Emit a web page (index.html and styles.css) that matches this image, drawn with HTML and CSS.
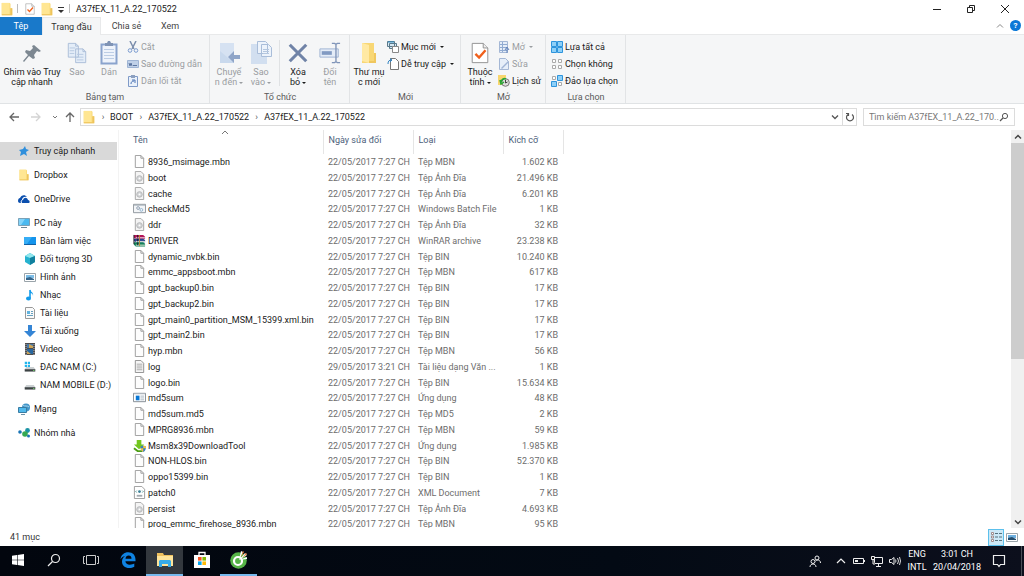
FILE: index.html
```html
<!DOCTYPE html>
<html lang="vi">
<head>
<meta charset="utf-8">
<title>A37fEX_11_A.22_170522</title>
<link rel="stylesheet" href="styles.css">
</head>
<body>
<svg class="sprite" aria-hidden="true">
  <symbol id="folder" viewBox="0 0 16 16"><path d="M2 1h9l1 1v5h2v8H2z" fill="#f8d775"/><path d="M2 1h9v13H2z" fill="#ffe693"/><path d="M12 7h2v8H2v-1h10z" fill="#eec45c"/></symbol>
  <symbol id="check-page" viewBox="0 0 20 24"><path d="M1.500 1.500h12l5 5v16h-17z" fill="#fff" stroke="#8c8c8c"/><path d="M13.500 1.500v5h5" fill="#eee" stroke="#8c8c8c"/><path d="M5 13l4 4 7-8" fill="none" stroke="#f0601c" stroke-width="2.600"/></symbol>
  <symbol id="f-page" viewBox="0 0 14 14"><path d="M2.500.5h6l3 3v10h-9z" fill="#fdfdfd" stroke="#9a9a9a"/><path d="M8.500.5v3h3" fill="none" stroke="#9a9a9a"/></symbol>
  <symbol id="f-disc" viewBox="0 0 14 14"><path d="M2.500.5h6l3 3v10h-9z" fill="#f4f4f4" stroke="#a4a4a4"/><circle cx="7" cy="8" r="3" fill="#d2d4d6" stroke="#b4b6b8"/><circle cx="7" cy="8" r="1" fill="#fff"/></symbol>
  <symbol id="f-batch" viewBox="0 0 14 14"><path d="M.5 2.500h13v9H.5z" fill="#f3f5f7" stroke="#8c939a"/><path d="M1 3.500h12" stroke="#aab4bd"/><circle cx="5.500" cy="6.500" r="1.500" fill="none" stroke="#8c9db0"/><circle cx="9" cy="8.500" r="1.500" fill="none" stroke="#8eb2d0"/></symbol>
  <symbol id="f-rar" viewBox="0 0 14 14"><path d="M1 1h10l2 2v2H3L1 4z" fill="#b31558"/><path d="M3 4h10" stroke="#eed6df"/><path d="M1 5h10l2 1.500V9H3L1 7.500z" fill="#27438e"/><path d="M3 8h10" stroke="#e7e7df"/><path d="M1 9h10l2 1.500v3H3l-2-2z" fill="#13805a"/><path d="M3 12h10" stroke="#f2f2e4"/><path d="M1 1v10M5 1v3M5 5v3M5 9v3" stroke="#211b21"/><path d="M7 1v12" stroke="#bd8a3b"/></symbol>
  <symbol id="f-text" viewBox="0 0 14 14"><path d="M2.500.5h6l3 3v10h-9z" fill="#f5f5f5" stroke="#8c8c8c"/><path d="M4 4.500h6M4 6.500h6M4 8.500h6M4 10.500h6" stroke="#a7a7a7"/></symbol>
  <symbol id="f-app" viewBox="0 0 14 14"><path d="M.5 2.500h13v9H.5z" fill="#fff" stroke="#7f8890"/><path d="M1 3h12" stroke="#b3bbc2"/><path d="M3 5h4v5H3z" fill="#0877d5"/><path d="M8 5.500h4M8 7.500h4M8 9.500h4" stroke="#a6b4c0"/></symbol>
  <symbol id="f-download" viewBox="0 0 14 14"><path d="M4 1h5v5h3L6.500 11 1 6h3z" fill="#72c61e"/><path d="M1 10l4 3h5" stroke="#4c9e14" stroke-width="2" fill="none"/><path d="M8 8l3-1 3 1c0 3-1 5-3 6-2-1-3-3-3-6z" fill="#397dbd"/><path d="M11 7l3 1v2h-3zM8 10h3v4c-1.500-1-2.500-2-3-4z" fill="#f1c340"/></symbol>
  <symbol id="f-xml" viewBox="0 0 14 14"><path d="M1.500.5h8l3 3v10h-11z" fill="#fff" stroke="#999"/><path d="M4 5L3 6l1 1M10 5l1 1-1 1" fill="none" stroke="#438f8a"/><circle cx="7" cy="6" r="1.500" fill="#3b8097"/><path d="M4 10.500h6" stroke="#a2aab0" stroke-width="2"/></symbol>
  <symbol id="i-copy" viewBox="0 0 22 24"><path d="M1.500 1.500h8l3 3v12h-11zM9.500 7.500h8l3 3v12h-11z" fill="#e4edf8" stroke="#a9bbd6"/><path d="M3 6.500h6M3 9.500h5M3 12.500h5M11 13.500h7M11 16.500h7M11 19.500h7" stroke="#b5c7df"/><path d="M9.500 1.500v3h3M17.500 7.500v3h3" fill="none" stroke="#a9bbd6"/></symbol>
  <symbol id="i-drive" viewBox="0 0 16 16"><path d="M3 8h10l2 3v3H1v-3z" fill="#cbd0d2"/><path d="M1 11h14v3H1z" fill="#3d4344"/><path d="M12 12h2v1h-2z" fill="#75e06c"/></symbol>
</svg>

<header class="titlebar">
  <svg class="ico14"><use href="#folder"/></svg><span class="tick"></span>
  <button class="quick" aria-label="Thuộc tính"><svg class="ico12"><use href="#check-page"/></svg></button>
  <button class="quick" aria-label="Thư mục mới"><svg class="ico14"><use href="#folder"/></svg></button>
  <button class="quick small" aria-label="Tùy chỉnh"><svg class="ico8" viewBox="0 0 8 8"><path d="M1 2.500h6" stroke="#333"/><path d="M1 5h6L4 8z" fill="#333"/></svg></button>
  <span class="tick"></span>
  <h1 class="title">A37fEX_11_A.22_170522</h1>
  <div class="winbtns">
    <button aria-label="Thu nhỏ"><svg class="ico10" viewBox="0 0 10 10"><path d="M1 5.500h8" stroke="#222"/></svg></button>
    <button aria-label="Khôi phục"><svg class="ico10" viewBox="0 0 10 10"><path d="M1.500 3.500h5v5h-5zM3.500 3V1.500h5v5H7" fill="none" stroke="#222"/></svg></button>
    <button aria-label="Đóng"><svg class="ico10" viewBox="0 0 10 10"><path d="M1 1l8 8M9 1L1 9" stroke="#222"/></svg></button>
  </div>
</header>

<nav class="tabs">
  <button class="tab file">Tệp</button><button class="tab active">Trang đầu</button><button class="tab share">Chia sẻ</button><button class="tab view">Xem</button>
  <span class="tabtools">
    <button aria-label="Thu gọn"><svg class="ico8" viewBox="0 0 8 8"><path d="M1 5.500l3-3 3 3" fill="none" stroke="#888"/></svg></button>
    <button class="help" aria-label="Trợ giúp">?</button>
  </span>
</nav>

<section class="ribbon">
  <div class="group">
    <div class="tools">
      <button class="big pin"><svg class="ico24" viewBox="0 0 24 24"><path d="M14 4l7 6-2 1-2-1-3 4 1 3-2 1-4-3-5 6-1-1 5-6-3-3 1-2 4 1 3-3-1-2z" fill="#7c8791"/></svg><span>Ghim vào Truy<br>cập nhanh</span></button>
      <button class="big off"><svg class="ico22"><use href="#i-copy"/></svg><span>Sao</span></button>
      <button class="big off w36"><svg class="ico24" viewBox="0 0 24 24"><path d="M4.500 3.500h15v19h-15z" fill="#eef3fb" stroke="#8aa3cd" stroke-width="2"/><path d="M8 2h2l1-2h2l1 2h2v3H8z" fill="#7f93b4"/><path d="M7 8.500h10M7 11.500h10M7 14.500h10M7 17.500h10" stroke="#bccde5"/></svg><span>Dán</span></button>
      <div class="stack">
        <button class="row off"><svg class="ico12" viewBox="0 0 12 12"><path d="M3 0l4 8M9 0L5 8" stroke="#7b8ead" stroke-width="1.500"/><circle cx="3" cy="9.500" r="1.800" fill="none" stroke="#7b9cd0"/><circle cx="9" cy="9.500" r="1.800" fill="none" stroke="#7b9cd0"/></svg>Cắt</button>
        <button class="row off"><svg class="ico12" viewBox="0 0 12 12"><path d="M.5 2.500h11v7H.5z" fill="#bfd0e8" stroke="#9eb4d4"/><path d="M2 5l1 3 1-3 1 3M6 7.500h4" fill="none" stroke="#5b75a0"/></svg>Sao đường dẫn</button>
        <button class="row off"><svg class="ico12" viewBox="0 0 12 12"><path d="M1.500 1.500h9v10h-9z" fill="#eaf1fa" stroke="#7f9ac8"/><path d="M4 0h4v3H4z" fill="#8ca0c0"/><path d="M4 9c0-2 1-3 3-3M5 5h3v3" fill="none" stroke="#4c74b5"/></svg>Dán lối tắt</button>
      </div>
    </div>
    <h2>Bảng tạm</h2>
  </div>
  <div class="group">
    <div class="tools pad2">
      <button class="big off w32"><svg class="ico24" viewBox="0 0 24 24"><path d="M3 2h14v20H3z" fill="#d6e2f2"/><path d="M3 22V10l14 12z" fill="#c9d9ed"/><path d="M23 14v4h-6v4l-6-6 6-6v4z" fill="#8fa5c8"/></svg><span>Chuyể<br>n đến<i class="caret"></i></span></button>
      <button class="big off w32"><svg class="ico24" viewBox="0 0 24 24"><path d="M2 3h16v20H2z" fill="#d2dff0"/><path d="M8.500.5h8l2 2v10h-10zM12.500 3.500h7l3 3v9h-10z" fill="#edf3fb" stroke="#a9bdd9"/><path d="M14 8.500h6M14 10.500h6M14 12.500h6" stroke="#b5c7df"/></svg><span>Sao<br>vào<i class="caret"></i></span></button>
      <span class="divider"></span>
      <button class="big w32"><svg class="ico22" viewBox="0 0 24 24"><path d="M3 3l18 18M21 3L3 21" stroke="#7083a7" stroke-width="3.400"/></svg><span>Xóa<br>bỏ<i class="caret"></i></span></button>
      <button class="big off w32"><svg class="ico22" viewBox="0 0 24 24"><path d="M1 7.500h20v9H1z" fill="#e4ecf7" stroke="#9db1d1"/><path d="M3 10h11v4H3z" fill="#819ac2"/><path d="M14 1.500h3l1.500 1 1.500-1h3M18.500 2v20M14 22.500h3l1.500-1 1.500 1h3" fill="none" stroke="#8095b9" stroke-width="1.500"/></svg><span>Đổi<br>tên</span></button>
    </div>
    <h2>Tổ chức</h2>
  </div>
  <div class="group">
    <div class="tools">
      <button class="big w36"><svg class="ico24" viewBox="0 0 24 24"><path d="M5 2h12v10h2v10H5z" fill="#f8d775"/><path d="M5 2l7 2v18l-7-2z" fill="#ffe9a3"/><path d="M17 12h2v10h-7v-2h5z" fill="#f0c75f"/></svg><span>Thư mụ<br>c mới</span></button>
      <div class="stack">
        <button class="row"><svg class="ico12" viewBox="0 0 12 12"><path d="M.5.5h7v5h-7zM2.500 2.500h7v5h-7z" fill="#d6e7f2" stroke="#597889"/><path d="M5.500 5.500h6v6h-6z" fill="#fff" stroke="#888"/><path d="M1 1h6" stroke="#338dc1"/></svg>Mục mới<i class="caret"></i></button>
        <button class="row"><svg class="ico12" viewBox="0 0 12 12"><path d="M3.500.5h5l3 3v8h-8z" fill="#fff" stroke="#777"/><path d="M1 6c0-3 1-4 4-4M3 .5L5 2 3 4" fill="none" stroke="#3385c3"/></svg>Dễ truy cập<i class="caret"></i></button>
      </div>
    </div>
    <h2>Mới</h2>
  </div>
  <div class="group">
    <div class="tools">
      <button class="big w36"><svg class="ico22"><use href="#check-page"/></svg><span>Thuộc<br>tính<i class="caret"></i></span></button>
      <div class="stack">
        <button class="row off"><svg class="ico12" viewBox="0 0 12 12"><path d="M1.500.5h8v11h-8z" fill="#e6edf8" stroke="#a4b7d5"/><path d="M2 3.500h7M2 6.500h7M2 9.500h7M4.500 1v10" stroke="#91abd1"/><path d="M9 12V7M7 9l2-3 2 3" stroke="#6282b9" fill="none"/></svg>Mở<i class="caret"></i></button>
        <button class="row off"><svg class="ico12" viewBox="0 0 12 12"><path d="M1.500.5h6l3 3v8h-9z" fill="#e6eef9" stroke="#a4b7d5"/><path d="M3 10l7-7 1 1-7 7z" fill="#9fb4d6"/></svg>Sửa</button>
        <button class="row"><svg class="ico12" viewBox="0 0 12 12"><path d="M0 0h8v10H0z" fill="#f8d66e"/><circle cx="7.500" cy="7.500" r="3.800" fill="#ddd" stroke="#777"/><path d="M7.500 5v3l2-1" stroke="#444" fill="none"/><path d="M3 7c1-3 3-4 5-3M2 5l1 4 3-2" fill="none" stroke="#25a734" stroke-width="1.500"/></svg>Lịch sử</button>
      </div>
    </div>
    <h2>Mở</h2>
  </div>
  <div class="group">
    <div class="tools pad4">
      <div class="stack">
        <button class="row"><svg class="ico12" viewBox="0 0 12 12"><path d="M.5.5h5v5h-5zM6.500.5h5v5h-5zM.5 6.500h5v5h-5zM6.500 6.500h5v5h-5z" fill="#8ed0f8" stroke="#2d94dc"/></svg>Lựa tất cả</button>
        <button class="row"><svg class="ico12" viewBox="0 0 12 12"><path d="M1.500 1.500h3v3h-3zM7.500 1.500h3v3h-3zM1.500 7.500h3v3h-3zM7.500 7.500h3v3h-3z" fill="#fff" stroke="#aaa"/></svg>Chọn không</button>
        <button class="row"><svg class="ico12" viewBox="0 0 12 12"><path d="M6.500.5h5v5h-5zM.5 6.500h5v5h-5z" fill="#8ed0f8" stroke="#2d94dc"/><path d="M1.500 1.500h3v3h-3zM7.500 7.500h3v3h-3z" fill="#fff" stroke="#aaa"/></svg>Đảo lựa chọn</button>
      </div>
    </div>
    <h2>Lựa chọn</h2>
  </div>
</section>

<div class="navbar">
  <button class="nav" aria-label="Quay lại"><svg class="ico10" viewBox="0 0 10 10"><path d="M10 5H1M5 1L1 5l4 4" fill="none" stroke="#666" stroke-width="1.300"/></svg></button>
  <button class="nav" aria-label="Tiến"><svg class="ico10" viewBox="0 0 10 10"><path d="M0 5h9M5 1l4 4-4 4" fill="none" stroke="#d4d4d4" stroke-width="1.300"/></svg></button>
  <button class="nav narrow" aria-label="Gần đây"><svg class="ico8" viewBox="0 0 8 8"><path d="M2 3l2 2 2-2" fill="none" stroke="#777"/></svg></button>
  <button class="nav narrow" aria-label="Lên"><svg class="ico10" viewBox="0 0 10 10"><path d="M5 10V1M1 5l4-4 4 4" fill="none" stroke="#666" stroke-width="1.300"/></svg></button>
  <div class="address">
    <svg class="ico14"><use href="#folder"/></svg>
    <span class="sep">›</span><a href="#boot">BOOT</a><span class="sep">›</span><a href="#outer">A37fEX_11_A.22_170522</a><span class="sep">›</span><a href="#inner">A37fEX_11_A.22_170522</a>
    <button class="drop" aria-label="Lịch sử địa chỉ"><svg class="ico8" viewBox="0 0 8 8"><path d="M1 2.500l3 3 3-3" fill="none" stroke="#555" stroke-width="1.300"/></svg></button>
    <button class="refresh" aria-label="Làm mới"><svg class="ico10" viewBox="0 0 10 10"><path d="M7 2.500a3.500 3.500 0 1 1-4 0M1 1.500h2.500V4" fill="none" stroke="#555" stroke-width="1.200"/></svg></button>
  </div>
  <div class="search">
    <input type="text" aria-label="Tìm kiếm" placeholder="Tìm kiếm A37fEX_11_A.22_170...">
    <svg class="ico10" viewBox="0 0 10 10"><circle cx="6" cy="4" r="2.600" fill="none" stroke="#555"/><path d="M4 6L1 9" stroke="#555" stroke-width="1.300"/></svg>
  </div>
</div>

<main class="content">
  <aside class="side">
    <ul>
      <li><a class="selected" href="#quick"><svg class="ico12" viewBox="0 0 12 12"><path d="M7 1l1 3 3 1-3 2 1 4-3-2-4 2 1-4-2-2 4-1z" fill="#2f8fdc"/></svg>Truy cập nhanh</a></li>
    </ul>
    <ul><li><a href="#dropbox"><svg class="ico12"><use href="#folder"/></svg>Dropbox</a></li></ul>
    <ul><li><a href="#onedrive"><svg class="ico12" viewBox="0 0 12 12"><path d="M0 8c0-2 1-3 2-3 1-3 5-4 7-1-3-1-5 1-5 3-1 0-2 2-1 3H2C1 10 0 9 0 8z" fill="#0b4fae"/><path d="M4 10c-1-2 0-3 1-3 1-3 4-3 5 0 2 0 2 3 1 3z" fill="#0b4fae"/></svg>OneDrive</a></li></ul>
    <ul>
      <li><a href="#pc"><svg class="ico12" viewBox="0 0 12 12"><path d="M.5 1.500h11v7H.5z" fill="#49b9f0" stroke="#7aa1b7"/><path d="M1 2h6L3 8H1z" fill="#83d4fa"/><path d="M3 10.500h6" stroke="#6b8798"/></svg>PC này</a></li>
      <li class="sub"><a href="#desktop"><svg class="ico12" viewBox="0 0 12 12"><path d="M0 2h12v8H0z" fill="#1494ec"/><path d="M0 2h8L3 9H0z" fill="#36adf5"/><path d="M0 9.500h12" stroke="#1261a5"/></svg>Bàn làm việc</a></li>
      <li class="sub"><a href="#3d"><svg class="ico12" viewBox="0 0 12 12"><path d="M1 3l5-3 5 3v6l-5 3-5-3z" fill="#26b2cf"/><path d="M1 3l5-3 5 3-5 2z" fill="#91e6ed"/><path d="M6 5l5-2v6l-5 3z" fill="#11809e"/></svg>Đối tượng 3D</a></li>
      <li class="sub"><a href="#pics"><svg class="ico12" viewBox="0 0 12 12"><path d="M.5 2.500h11v8H.5z" fill="#fff" stroke="#9aa4aa"/><path d="M2 4h8v3H2z" fill="#7cbde7"/><path d="M2 7l4-1 4 2v1H2z" fill="#34658b"/></svg>Hình ảnh</a></li>
      <li class="sub"><a href="#music"><svg class="ico12" viewBox="0 0 12 12"><path d="M6 1v8" stroke="#149bea" stroke-width="1.600"/><path d="M6 0c0 3 4 3 3 7 0-2-1-3-3-3z" fill="#149bea"/><ellipse cx="4.500" cy="9.500" rx="2.500" ry="2" fill="#149bea"/></svg>Nhạc</a></li>
      <li class="sub"><a href="#docs"><svg class="ico12" viewBox="0 0 12 12"><path d="M1.500.5h7l2 2v9h-9z" fill="#fafafa" stroke="#999"/><path d="M3 4h3v3H3z" fill="#60b3df"/><path d="M7 4.500h2M7 6.500h2M3 8.500h6" stroke="#66a1c0"/></svg>Tài liệu</a></li>
      <li class="sub"><a href="#down"><svg class="ico12" viewBox="0 0 12 12"><path d="M4 0h4v6h4l-6 6-6-6h4z" fill="#3585d5"/></svg>Tải xuống</a></li>
      <li class="sub"><a href="#video"><svg class="ico12" viewBox="0 0 12 12"><path d="M1 0h10v12H1z" fill="#4c4c4e"/><path d="M3 1h6v4H3z" fill="#497aaa"/><path d="M3 6h6v5H3z" fill="#2867a0"/><path d="M5 1l4 2v2H5zM3 8l4 3H3z" fill="#cda557"/><path d="M2 1v11M10 1v11" stroke="#bbb" stroke-dasharray="1 1"/></svg>Video</a></li>
      <li class="sub"><a href="#c"><svg class="ico12" viewBox="0 0 16 16"><path d="M1 1h3v3H1zM5 1h3v3H5zM1 5h3v3H1zM5 5h3v3H5z" fill="#20b5ec"/><use href="#i-drive" width="16" height="16"/></svg>ĐAC NAM (C:)</a></li>
      <li class="sub"><a href="#d"><svg class="ico12"><use href="#i-drive"/></svg>NAM MOBILE (D:)</a></li>
    </ul>
    <ul><li><a href="#network"><svg class="ico12" viewBox="0 0 12 12"><circle cx="8" cy="4.500" r="4" fill="#4294c7"/><path d="M5 2c2 2 4 0 6 2" stroke="#aad8ef" fill="none"/><path d="M.5 4.500h8v5h-8z" fill="#50b9ec" stroke="#397ca2"/><path d="M3 11.500h4" stroke="#6d92a9"/></svg>Mạng</a></li></ul>
    <ul><li><a href="#home"><svg class="ico12" viewBox="0 0 12 12"><circle cx="2" cy="5" r="1.800" fill="#1874b5"/><circle cx="9.500" cy="3.500" r="2.400" fill="#1b93a5"/><circle cx="7" cy="7" r="2.800" fill="#35a851"/><circle cx="10.500" cy="9" r="1.500" fill="#1874b5"/></svg>Nhóm nhà</a></li></ul>
  </aside>

  <div class="files">
    <table>
      <colgroup><col class="c-name"><col class="c-date"><col class="c-type"><col class="c-size"><col></colgroup>
      <thead><tr><th>Tên<svg class="sort" viewBox="0 0 8 4"><path d="M1 4l3-3 3 3" fill="none" stroke="#777"/></svg></th><th>Ngày sửa đổi</th><th>Loại</th><th>Kích cỡ</th><td></td></tr></thead>
      <tbody>
        <tr><td><svg><use href="#f-page"/></svg>8936_msimage.mbn</td><td>22/05/2017 7:27 CH</td><td>Tệp MBN</td><td>1.602 KB</td></tr>
        <tr><td><svg><use href="#f-disc"/></svg>boot</td><td>22/05/2017 7:27 CH</td><td>Tệp Ảnh Đĩa</td><td>21.496 KB</td></tr>
        <tr><td><svg><use href="#f-disc"/></svg>cache</td><td>22/05/2017 7:27 CH</td><td>Tệp Ảnh Đĩa</td><td>6.201 KB</td></tr>
        <tr><td><svg><use href="#f-batch"/></svg>checkMd5</td><td>22/05/2017 7:27 CH</td><td>Windows Batch File</td><td>1 KB</td></tr>
        <tr><td><svg><use href="#f-disc"/></svg>ddr</td><td>22/05/2017 7:27 CH</td><td>Tệp Ảnh Đĩa</td><td>32 KB</td></tr>
        <tr><td><svg><use href="#f-rar"/></svg>DRIVER</td><td>22/05/2017 7:27 CH</td><td>WinRAR archive</td><td>23.238 KB</td></tr>
        <tr><td><svg><use href="#f-page"/></svg>dynamic_nvbk.bin</td><td>22/05/2017 7:27 CH</td><td>Tệp BIN</td><td>10.240 KB</td></tr>
        <tr><td><svg><use href="#f-page"/></svg>emmc_appsboot.mbn</td><td>22/05/2017 7:27 CH</td><td>Tệp MBN</td><td>617 KB</td></tr>
        <tr><td><svg><use href="#f-page"/></svg>gpt_backup0.bin</td><td>22/05/2017 7:27 CH</td><td>Tệp BIN</td><td>17 KB</td></tr>
        <tr><td><svg><use href="#f-page"/></svg>gpt_backup2.bin</td><td>22/05/2017 7:27 CH</td><td>Tệp BIN</td><td>17 KB</td></tr>
        <tr><td><svg><use href="#f-page"/></svg>gpt_main0_partition_MSM_15399.xml.bin</td><td>22/05/2017 7:27 CH</td><td>Tệp BIN</td><td>17 KB</td></tr>
        <tr><td><svg><use href="#f-page"/></svg>gpt_main2.bin</td><td>22/05/2017 7:27 CH</td><td>Tệp BIN</td><td>17 KB</td></tr>
        <tr><td><svg><use href="#f-page"/></svg>hyp.mbn</td><td>22/05/2017 7:27 CH</td><td>Tệp MBN</td><td>56 KB</td></tr>
        <tr><td><svg><use href="#f-text"/></svg>log</td><td>29/05/2017 3:21 CH</td><td>Tài liệu dạng Văn ...</td><td>1 KB</td></tr>
        <tr><td><svg><use href="#f-page"/></svg>logo.bin</td><td>22/05/2017 7:27 CH</td><td>Tệp BIN</td><td>15.634 KB</td></tr>
        <tr><td><svg><use href="#f-app"/></svg>md5sum</td><td>22/05/2017 7:27 CH</td><td>Ứng dụng</td><td>48 KB</td></tr>
        <tr><td><svg><use href="#f-page"/></svg>md5sum.md5</td><td>22/05/2017 7:27 CH</td><td>Tệp MD5</td><td>2 KB</td></tr>
        <tr><td><svg><use href="#f-page"/></svg>MPRG8936.mbn</td><td>22/05/2017 7:27 CH</td><td>Tệp MBN</td><td>59 KB</td></tr>
        <tr><td><svg><use href="#f-download"/></svg>Msm8x39DownloadTool</td><td>22/05/2017 7:27 CH</td><td>Ứng dụng</td><td>1.985 KB</td></tr>
        <tr><td><svg><use href="#f-page"/></svg>NON-HLOS.bin</td><td>22/05/2017 7:27 CH</td><td>Tệp BIN</td><td>52.370 KB</td></tr>
        <tr><td><svg><use href="#f-page"/></svg>oppo15399.bin</td><td>22/05/2017 7:27 CH</td><td>Tệp BIN</td><td>1 KB</td></tr>
        <tr><td><svg><use href="#f-xml"/></svg>patch0</td><td>22/05/2017 7:27 CH</td><td>XML Document</td><td>7 KB</td></tr>
        <tr><td><svg><use href="#f-disc"/></svg>persist</td><td>22/05/2017 7:27 CH</td><td>Tệp Ảnh Đĩa</td><td>4.693 KB</td></tr>
        <tr><td><svg><use href="#f-page"/></svg>prog_emmc_firehose_8936.mbn</td><td>22/05/2017 7:27 CH</td><td>Tệp MBN</td><td>95 KB</td></tr>
      </tbody>
    </table>
  </div>

  <div class="scroll">
    <button aria-label="Cuộn lên"><svg class="ico8" viewBox="0 0 8 8"><path d="M1 5.500l3-3 3 3" fill="none" stroke="#444" stroke-width="1.500"/></svg></button>
    <div class="track"><div class="thumb"></div></div>
    <button aria-label="Cuộn xuống"><svg class="ico8" viewBox="0 0 8 8"><path d="M1 2.500l3 3 3-3" fill="none" stroke="#444" stroke-width="1.500"/></svg></button>
  </div>
</main>

<footer class="status">
  <span class="count">41 mục</span>
  <span class="views">
    <button class="on" aria-label="Chi tiết"><svg class="ico12" viewBox="0 0 12 12"><path d="M1.500 1.500h2v2h-2zM1.500 5h2v2h-2zM1.500 8.500h2v2h-2z" fill="#fff" stroke="#a08c8c"/><path d="M5 2.500h3M9 2.500h3M5 6h3M9 6h3M5 9.500h3M9 9.500h3" stroke="#56717d"/></svg></button>
    <button aria-label="Biểu tượng lớn"><svg class="ico12" viewBox="0 0 12 12"><path d="M.5 2.500h11v8H.5z" fill="#fff" stroke="#9aa4aa"/><path d="M2 4h8v3H2z" fill="#6dafdf"/><path d="M2 7l4-1 4 2v1H2z" fill="#244c6b"/></svg></button>
  </span>
</footer>

<nav class="taskbar">
  <button class="task first" aria-label="Bắt đầu"><svg class="ico12" viewBox="0 0 12 12"><path d="M0 1.700L5 1v4.700H0zM5.600.9L12 0v5.700H5.600zM0 6.300h5V11l-5-.7zM5.600 6.300H12V12l-6.400-.9z" fill="#fff"/></svg></button>
  <button class="task first" aria-label="Tìm kiếm"><svg class="ico14" viewBox="0 0 14 14"><circle cx="8.500" cy="5.500" r="4" fill="none" stroke="#eee" stroke-width="1.200"/><path d="M5.500 8.500L1 13" stroke="#eee" stroke-width="1.300"/></svg></button>
  <button class="task" aria-label="Dạng xem tác vụ"><svg class="ico16" viewBox="0 0 16 16"><path d="M3.500 3.500h9v9h-9zM2 4.500H.5v7H2M14 4.500h1.500v7H14" fill="none" stroke="#ccc"/></svg></button>
  <button class="task" aria-label="Edge"><svg class="ico16" viewBox="0 0 16 16"><path d="M.5 7.200C1 3 4.200.3 8.300.3c4.600 0 7.200 3.200 7.200 7.200v1.800H5.400c.2 2.300 2 3.500 4.400 3.500 1.800 0 3.200-.5 4.500-1.200v3.200c-1.400.8-3.200 1.200-5 1.200-4.500 0-7.300-2.600-7.300-6.500 0-2.500 1.200-4.400 3.600-5.700C3.800 4.200 1.900 5.200.5 7.200zM5.500 6.700h6c0-2-1-3.100-2.800-3.100-1.800 0-3 1.200-3.200 3.100z" fill="#0f83e2"/></svg></button>
  <button class="task current" aria-label="File Explorer"><svg class="ico16" viewBox="0 0 16 16"><path d="M0 1h6l1 2h9v11H0z" fill="#eec05e"/><path d="M0 4h16v10H0z" fill="#ffe49a"/><path d="M2 15V9l1-1h10l1 1v6h-3v-3H5v3z" fill="#37abe7"/></svg></button>
  <button class="task" aria-label="Store"><svg class="ico18" viewBox="0 0 18 18"><path d="M6 5V1.500h6V5" fill="none" stroke="#fff" stroke-width="1.300"/><path d="M1 4h16v13H1z" fill="#fff"/><path d="M5 6h3.600v3.600H5z" fill="#f35325"/><path d="M9.400 6H13v3.600H9.400z" fill="#81bc06"/><path d="M5 10.400h3.600V14H5z" fill="#05a6f0"/><path d="M9.400 10.400H13V14H9.400z" fill="#ffba08"/></svg></button>
  <button class="task running" aria-label="Cốc Cốc"><svg class="ico18" viewBox="0 0 18 18"><circle cx="8.500" cy="9.500" r="8.300" fill="#56b447"/><circle cx="8" cy="10" r="4" fill="none" stroke="#fff" stroke-width="2.200"/><path d="M9 9l2-9 2 1zM9 9l6-7 2 2zM9 9l8-3v2z" fill="#fff"/><path d="M11 6l2-6 1 1zM12 7l4-5 1 1z" fill="#ee7d35"/></svg></button>
  <div class="tray">
    <button class="people" aria-label="Mọi người"><svg class="ico12" viewBox="0 0 12 12"><circle cx="8" cy="3" r="2" fill="none" stroke="#eee"/><circle cx="4" cy="6.500" r="2" fill="none" stroke="#eee"/><path d="M1 12c0-4 6-4 6 0M6.500 6c2-2 5-1 5 2" fill="none" stroke="#eee"/></svg></button>
    <button aria-label="Biểu tượng ẩn"><svg class="ico10" viewBox="0 0 10 10"><path d="M1 7l4-4 4 4" fill="none" stroke="#eee" stroke-width="1.200"/></svg></button>
    <button aria-label="Pin"><svg class="ico12" viewBox="0 0 12 12"><path d="M.5 3.500h10v5H.5z" fill="none" stroke="#eee"/><path d="M2 5h3v2H2zM11 5h1v2h-1z" fill="#eee"/></svg></button>
    <button aria-label="Mạng"><svg class="ico12" viewBox="0 0 12 12"><path d="M3.500 2.500h8v6h-8zM7.500 9v2M5 11.500h5" fill="none" stroke="#eee"/><path d="M.5 1.500h3v3h-3zM2 5v4h2" fill="#111" stroke="#eee"/></svg></button>
    <button aria-label="Âm lượng"><svg class="ico12" viewBox="0 0 12 12"><path d="M.5 4.500h2l2.500-2v7l-2.500-2h-2z" fill="none" stroke="#eee"/><path d="M6.500 4.500q1 1.500 0 3M8.500 3q2 3 0 6M10.500 2q2 4 0 8" fill="none" stroke="#ddd"/></svg></button>
    <button class="lang">ENG<br>INTL</button>
    <button class="clock">3:01 CH<br>20/04/2018</button>
    <button class="notes" aria-label="Thông báo"><svg class="ico14" viewBox="0 0 14 14"><path d="M1.500 1.500h11v9h-4L7 12.500 5.500 10.500h-4z" fill="none" stroke="#eee" stroke-width="1.200"/></svg></button>
  </div>
</nav>
</body>
</html>
```

FILE: styles.css
```css
* { box-sizing: border-box; }
body {
  margin: 0;
  height: 100vh;
  display: flex;
  flex-direction: column;
  overflow: hidden;
  background: #fff;
  color: #1a1a1a;
  font: 9px/12px Roboto, "Noto Sans", sans-serif;
}
button {
  margin: 0;
  padding: 0;
  border: 0;
  background: none;
  color: inherit;
  font: inherit;
  display: flex;
  align-items: center;
  justify-content: center;
}
a { color: inherit; text-decoration: none; }
h1, h2, ul { margin: 0; padding: 0; font: inherit; list-style: none; }
svg { flex: none; display: block; }
.sprite { position: absolute; width: 0; height: 0; }
.ico8 { width: 8px; height: 8px; }
.ico10 { width: 10px; height: 10px; }
.ico12 { width: 12px; height: 12px; }
.ico14 { width: 14px; height: 14px; }
.ico16 { width: 16px; height: 16px; }
.ico18 { width: 18px; height: 18px; }
.ico22 { width: 22px; height: 22px; margin: 1px 0; }
.ico24 { width: 24px; height: 24px; }

.titlebar { display: flex; align-items: center; height: 17px; flex: none; }
.tick { width: 1px; height: 9px; margin: 0 3px; background: #bbb; }
.quick { width: 17px; height: 17px; }
.quick.small { width: 11px; }
.title { margin-left: 3px; }
.winbtns { display: flex; margin-left: auto; padding-right: 2px; }
.winbtns button { width: 34px; height: 16px; }

.tabs { display: flex; height: 18px; flex: none; border-bottom: 1px solid #e8e9ea; color: #444; }
.tab { height: 18px; }
.tab.file { width: 42px; background: #1979ca; color: #fff; }
.tab.active { width: 59px; background: #f5f6f7; border: 1px solid #e8e9ea; border-bottom: 0; color: #333; }
.tab.share { width: 51px; }
.tab.view { width: 36px; }
.tabtools { display: flex; align-items: center; gap: 6px; margin-left: auto; padding-right: 3px; }
.help { width: 11px; height: 11px; border-radius: 50%; background: #0b78d7; color: #fff; font-size: 8px; font-weight: 700; }

.ribbon {
  display: grid;
  grid-template-columns: 210px 140px 111px 85px 80px 1fr;
  flex: none;
  height: 69px;
  background: #f5f6f7;
  border-bottom: 1px solid #e0e3e5;
}
.group { display: flex; flex-direction: column; padding: 3px 0 0 1px; border-right: 1px solid #e2e4e6; }
.group:last-child { border-right: 1px solid #e2e4e6; }
.group h2 { text-align: center; color: #5a5a5a; }
.tools { display: flex; height: 53px; }
.tools.pad2 { padding-left: 2px; }
.tools.pad4 { padding-left: 4px; }
.big { flex-direction: column; justify-content: flex-start; width: 28px; padding-top: 3px; gap: 2px; line-height: 10px; white-space: nowrap; }
.big.pin { width: 62px; }
.big.w32 { width: 32px; }
.big.w36 { width: 36px; }
.off { color: #9a9da1; }
.divider { width: 1px; height: 46px; margin: 2px; background: #e0e2e4; }
.stack { display: flex; flex-direction: column; }
.row { justify-content: flex-start; gap: 2px; height: 17px; white-space: nowrap; }
.caret { display: inline-block; margin-left: 2px; border: 2px solid transparent; border-top-color: currentColor; border-bottom: 0; vertical-align: middle; }

.navbar { display: flex; flex: none; height: 26px; padding: 4px 9px 4px 3px; }
.nav { width: 22px; }
.nav.narrow { width: 15px; }
.address { display: flex; align-items: center; flex: 1; border: 1px solid #dcdcdc; margin: 0 6px 0 3px; padding-left: 1px; }
.sep { width: 14px; text-align: center; color: #555; }
.address a + .sep { width: 15px; }
.address button { height: 100%; width: 14px; }
.address .drop { margin-left: auto; }
.address .refresh { border-left: 1px solid #dcdcdc; }
.search { display: flex; align-items: center; width: 152px; border: 1px solid #dcdcdc; padding: 0 5px; }
.search input { flex: 1; min-width: 0; border: 0; padding: 0; outline: 0; background: none; font: inherit; color: #333; }
.search input::placeholder { color: #777; opacity: 1; }

.content { display: flex; flex: 1; min-height: 0; }
.side { width: 119px; flex: none; padding-top: 12px; border-right: 1px solid #f3f3f3; }
.side ul { margin-bottom: 6px; }
.side a { display: flex; align-items: center; gap: 4px; height: 18px; margin-right: 1px; padding-left: 18px; white-space: nowrap; }
.side .sub a { padding-left: 24px; }
.side .selected { background: #d9d9d9; }

.files { flex: 1; min-width: 0; overflow: hidden; }
table { width: 100%; table-layout: fixed; border-collapse: collapse; }
.c-name { width: 204px; }
.c-date, .c-type { width: 90px; }
.c-size { width: 60px; }
td, th { padding: 0 5px; font-weight: 400; text-align: left; white-space: nowrap; color: #6d6d6d; }
thead tr { height: 24px; }
th { position: relative; padding-bottom: 4px; color: #4c607a; border-right: 1px solid #e5e5e5; }
th:first-child, td:first-child { padding-left: 14px; }
.sort { position: absolute; top: 0; left: 50%; width: 8px; height: 4px; }
tbody tr { height: 16px; }
tbody tr:nth-child(4n) { height: 15px; }
tbody td { line-height: 15px; }
tbody td:first-child { color: #1a1a1a; }
tbody td:nth-child(4) { text-align: right; }
tbody svg { display: inline-block; width: 13px; height: 13px; margin-right: 2px; vertical-align: -3px; }

.scroll { display: flex; flex-direction: column; width: 13px; flex: none; background: #f0f0f0; }
.scroll button { height: 13px; width: 13px; }
.track { flex: 1; }
.thumb { height: 58%; background: #cdcdcd; }

.status { display: flex; align-items: center; height: 18px; flex: none; padding-left: 10px; color: #333; }
.count { padding-right: 8px; }
.views { display: flex; margin-left: auto; padding-right: 4px; }
.views button { width: 16px; height: 17px; }
.views .on { border: 1px solid #5cc0ec; background: #cbe8f6; }

.taskbar { display: flex; height: 30px; flex: none; background: linear-gradient(90deg, #02060e, #030a14 60%, #0c0f1c); color: #fff; }
.task { width: 37px; border-bottom: 2px solid transparent; }
.task.first { width: 36px; }
.task.current { background: #33383e; border-color: #76b9ed; }
.task.running { border-color: #76b9ed; }
.tray { display: flex; margin-left: auto; padding-right: 7px; margin-right: 2px; border-right: 1px solid #4a4e57; }
.tray button { width: 18px; line-height: 13px; }
.tray .people { width: 34px; }
.tray .lang { width: 26px; }
.tray .clock { width: 54px; }
.tray .notes { width: 30px; }
```
